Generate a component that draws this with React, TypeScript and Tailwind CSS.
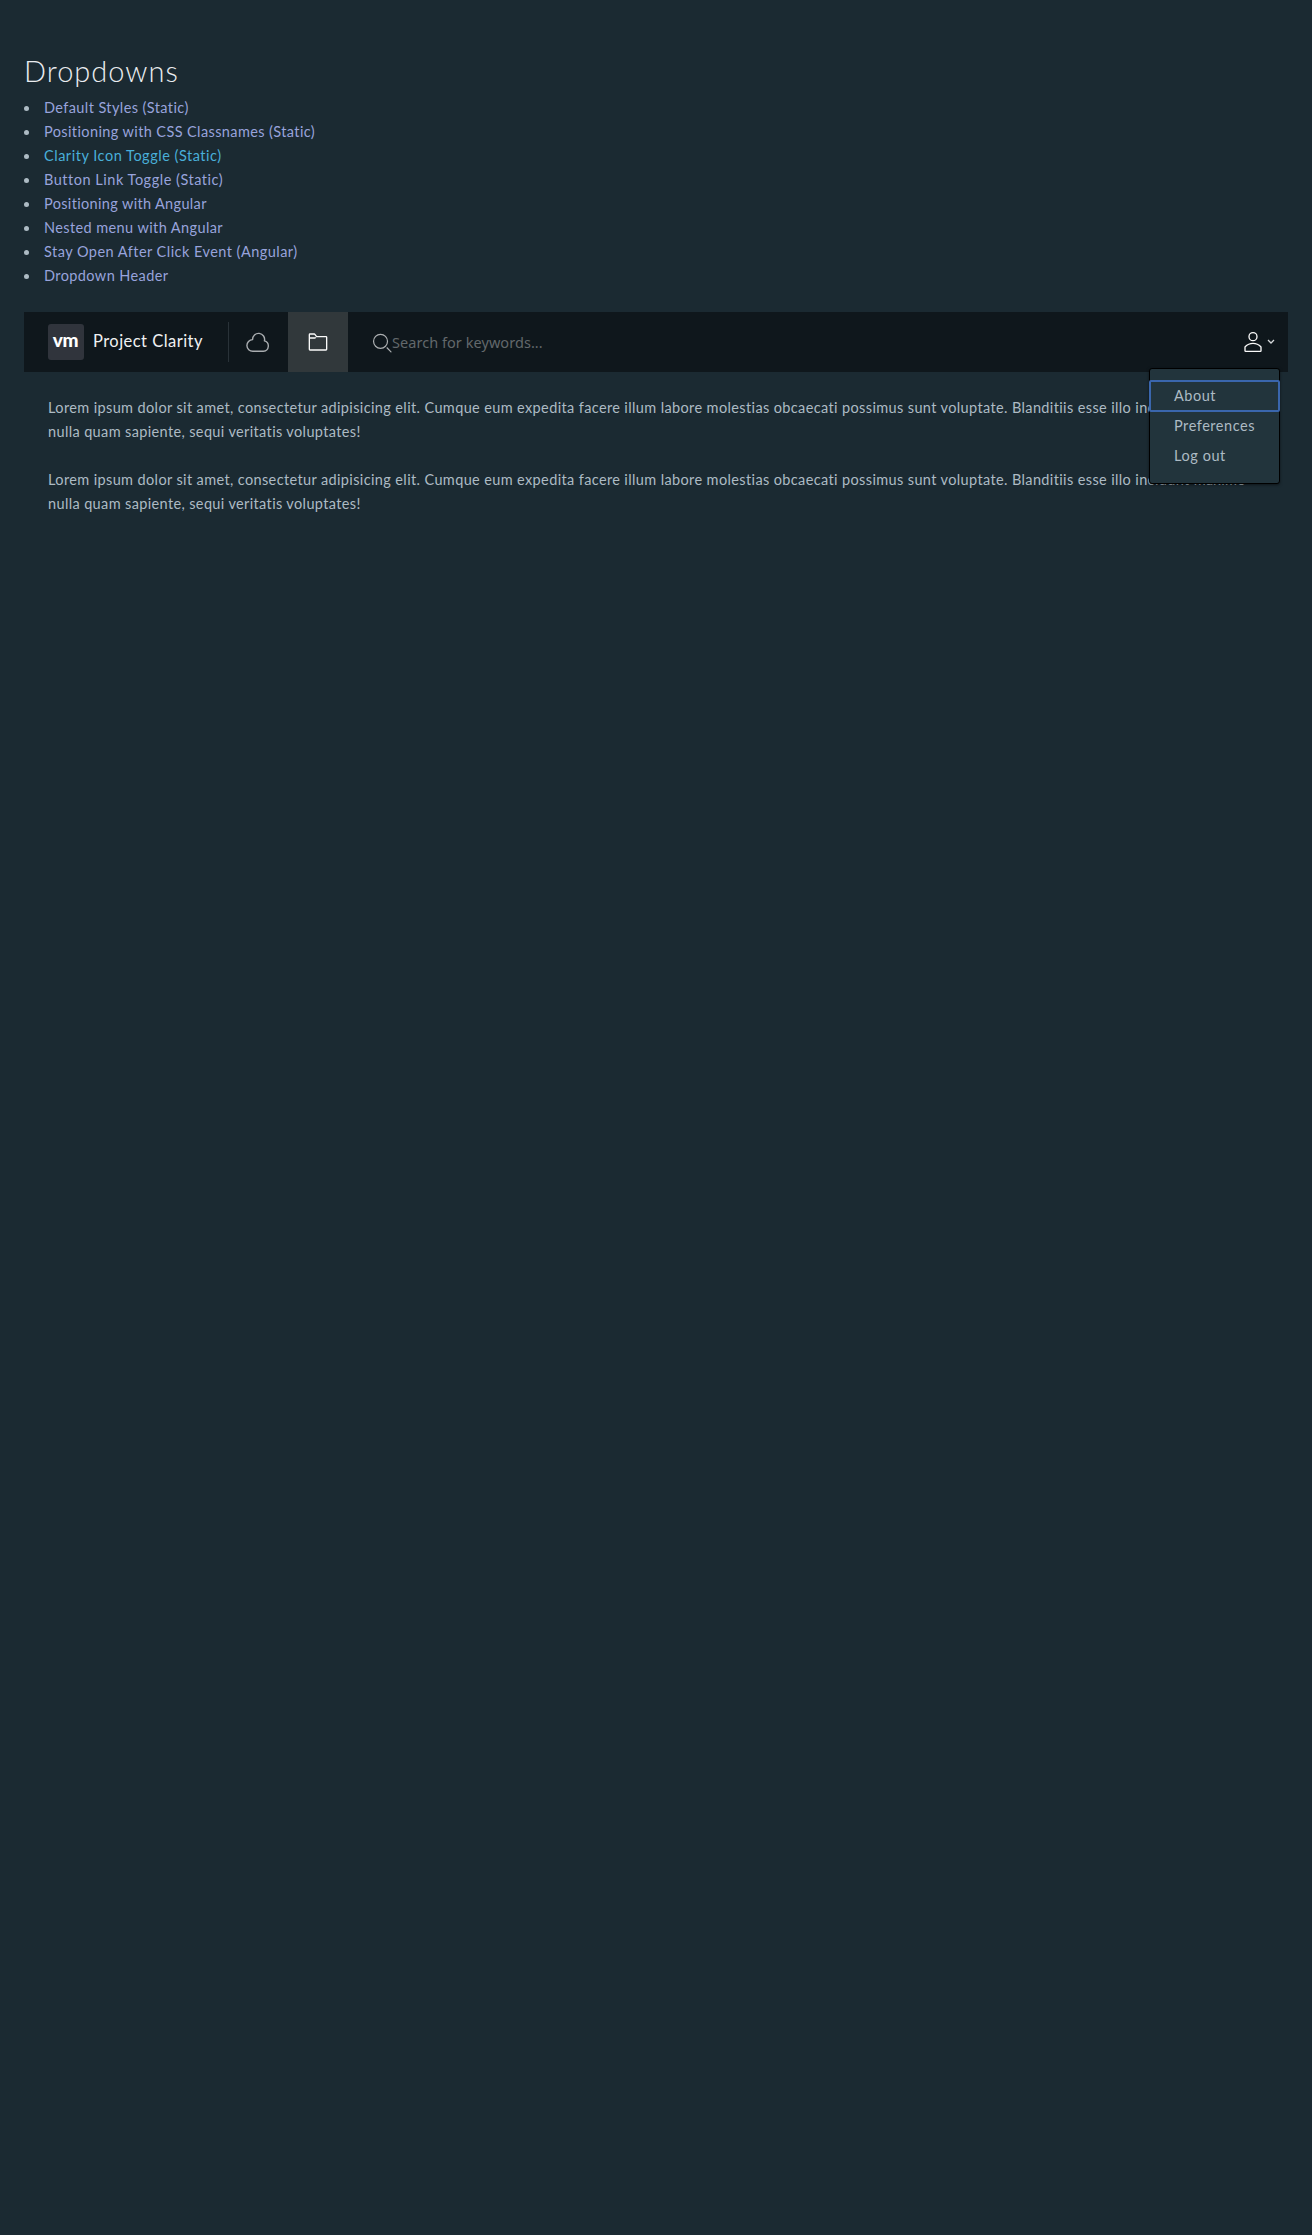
const links = [
  { label: 'Default Styles (Static)', tracking: 'tracking-[0.405px]', color: 'text-[#98a3dc]' },
  { label: 'Positioning with CSS Classnames (Static)', tracking: 'tracking-[0.39px]', color: 'text-[#98a3dc]' },
  { label: 'Clarity Icon Toggle (Static)', tracking: 'tracking-[0.52px]', color: 'text-[#49afd9]' },
  { label: 'Button Link Toggle (Static)', tracking: 'tracking-[0.52px]', color: 'text-[#98a3dc]' },
  { label: 'Positioning with Angular', tracking: 'tracking-[0.34px]', color: 'text-[#98a3dc]' },
  { label: 'Nested menu with Angular', tracking: 'tracking-[0.4px]', color: 'text-[#98a3dc]' },
  { label: 'Stay Open After Click Event (Angular)', tracking: 'tracking-[0.46px]', color: 'text-[#98a3dc]' },
  { label: 'Dropdown Header', tracking: 'tracking-[0.4px]', color: 'text-[#98a3dc]' },
];

const loremTop =
  'Lorem ipsum dolor sit amet, consectetur adipisicing elit. Cumque eum expedita facere illum labore molestias obcaecati possimus sunt voluptate. Blanditiis esse illo incidunt maxime';
const loremBottom = 'nulla quam sapiente, sequi veritatis voluptates!';

function CloudIcon() {
  return (
    <svg width="24" height="24" viewBox="0 0 24 24" fill="none" stroke="#a9adb0" strokeWidth="1.4" strokeLinejoin="round">
      <path d="M6.9 21.3A5.8 5.8 0 0 1 6.6 9.6A6 6 0 1 1 18.4 10.9A5.3 5.3 0 0 1 17.4 21.3Z" />
    </svg>
  );
}

function FolderIcon() {
  return (
    <svg width="24" height="24" viewBox="0 0 36 36" fill="#fafafa">
      <path d="M30,9H16.42L14.11,5.82A2,2,0,0,0,12.49,5H6A2,2,0,0,0,4,7V29a2,2,0,0,0,2,2H30a2,2,0,0,0,2-2V11A2,2,0,0,0,30,9Zm0,20H6V13h7.31a2,2,0,0,0,2-2H6V7h6.49l2.61,3.59a1,1,0,0,0,.81.41H30Z" />
    </svg>
  );
}

function SearchIcon() {
  return (
    <svg className="shrink-0" width="21" height="21" viewBox="0 0 36 36" fill="#adb0b2">
      <path d="M16.33,5.05A10.95,10.95,0,1,1,5.39,16,11,11,0,0,1,16.33,5.05m0-2.05a13,13,0,1,0,13,13,13,13,0,0,0-13-13Z" />
      <path d="M35,33.29l-7.37-7.42-1.42,1.41,7.37,7.42A1,1,0,1,0,35,33.29Z" />
    </svg>
  );
}

function UserIcon() {
  return (
    <svg width="24" height="24" viewBox="0 0 36 36" fill="#fafafa">
      <path d="M18,17a7,7,0,1,0-7-7A7,7,0,0,0,18,17ZM18,5a5,5,0,1,1-5,5A5,5,0,0,1,18,5Z" />
      <path d="M30.47,24.37a17.16,17.16,0,0,0-24.93,0A2,2,0,0,0,5,25.74V31a2,2,0,0,0,2,2H29a2,2,0,0,0,2-2V25.74A2,2,0,0,0,30.47,24.37ZM29,31H7V25.73a15.17,15.17,0,0,1,22,0Z" />
    </svg>
  );
}

function UserMenu() {
  return (
    <div className="absolute top-14 right-2 z-10 flex h-[116px] w-[131px] flex-col rounded-[3px] border border-black bg-[#22343c] py-3 text-[#adbbc4] shadow-[0_1px_3px_rgba(0,0,0,0.5)]">
      <a className="flex h-[30px] items-center rounded-[1px] pl-6 tracking-[0.5px] outline-2 -outline-offset-1 outline-[#3a66ad]">
        About
      </a>
      <a className="flex h-[30px] items-center pl-6 tracking-[0.54px]">Preferences</a>
      <a className="flex h-[30px] items-center pl-6 tracking-[0.57px]">Log out</a>
    </div>
  );
}

function Header() {
  return (
    <header className="relative flex h-[60px] bg-[#0f171c]">
      <div className="flex w-[204px] items-center pl-6">
        <div className="flex size-9 items-center justify-center rounded-[3px] bg-[#30343c] pr-px pb-[5px] text-[19px] leading-none font-black tracking-[-0.3px] text-white">
          vm
        </div>
        <span className="pb-0.5 pl-[9px] text-[16.5px] leading-6 tracking-[0.465px] whitespace-nowrap text-[#f0f1f2]">
          Project Clarity
        </span>
      </div>
      <div className="flex w-[60px] items-center justify-center bg-[linear-gradient(#293238,#293238)] bg-[length:1px_40px] bg-left bg-no-repeat">
        <CloudIcon />
      </div>
      <div className="flex w-[60px] items-center justify-center bg-[#31383b]">
        <FolderIcon />
      </div>
      <div className="flex flex-1 items-center pl-[23px]">
        <SearchIcon />
        <span className="font-['Noto_Sans'] text-[14.5px] leading-6 tracking-[0.05px] whitespace-nowrap text-[#62686b]">
          Search for keywords...
        </span>
      </div>
      <button className="flex items-center gap-[2px] pr-[13px]">
        <UserIcon />
        <svg width="8" height="6" viewBox="0 0 8 6" fill="none" stroke="#d5d8da" strokeWidth="1.3">
          <path d="M1 1L4 4L7 1" />
        </svg>
      </button>
      <UserMenu />
    </header>
  );
}

function Paragraph() {
  return (
    <p className="whitespace-nowrap">
      <span className="block tracking-[0.373px]">{loremTop}</span>
      <span className="block tracking-[0.365px]">{loremBottom}</span>
    </p>
  );
}

export default function App() {
  return (
    <div className="h-[2235px] bg-[#1b2a32] px-6 pt-12 font-['Lato',sans-serif] text-[14.5px] leading-6 text-[#adbbc4]">
      <h2 className="h-12 text-[29px] leading-[46px] font-light tracking-[1px] text-[#eaedf0]">Dropdowns</h2>
      <ul className="mb-6">
        {links.map((l) => (
          <li key={l.label} className="flex h-6 items-center gap-[15px]">
            <span className="mt-px size-[5px] rounded-full bg-[#adbbc4]" />
            <a className={`${l.tracking} ${l.color}`}>{l.label}</a>
          </li>
        ))}
      </ul>
      <Header />
      <main className="flex flex-col gap-6 px-6 pt-6">
        <Paragraph />
        <Paragraph />
      </main>
    </div>
  );
}
